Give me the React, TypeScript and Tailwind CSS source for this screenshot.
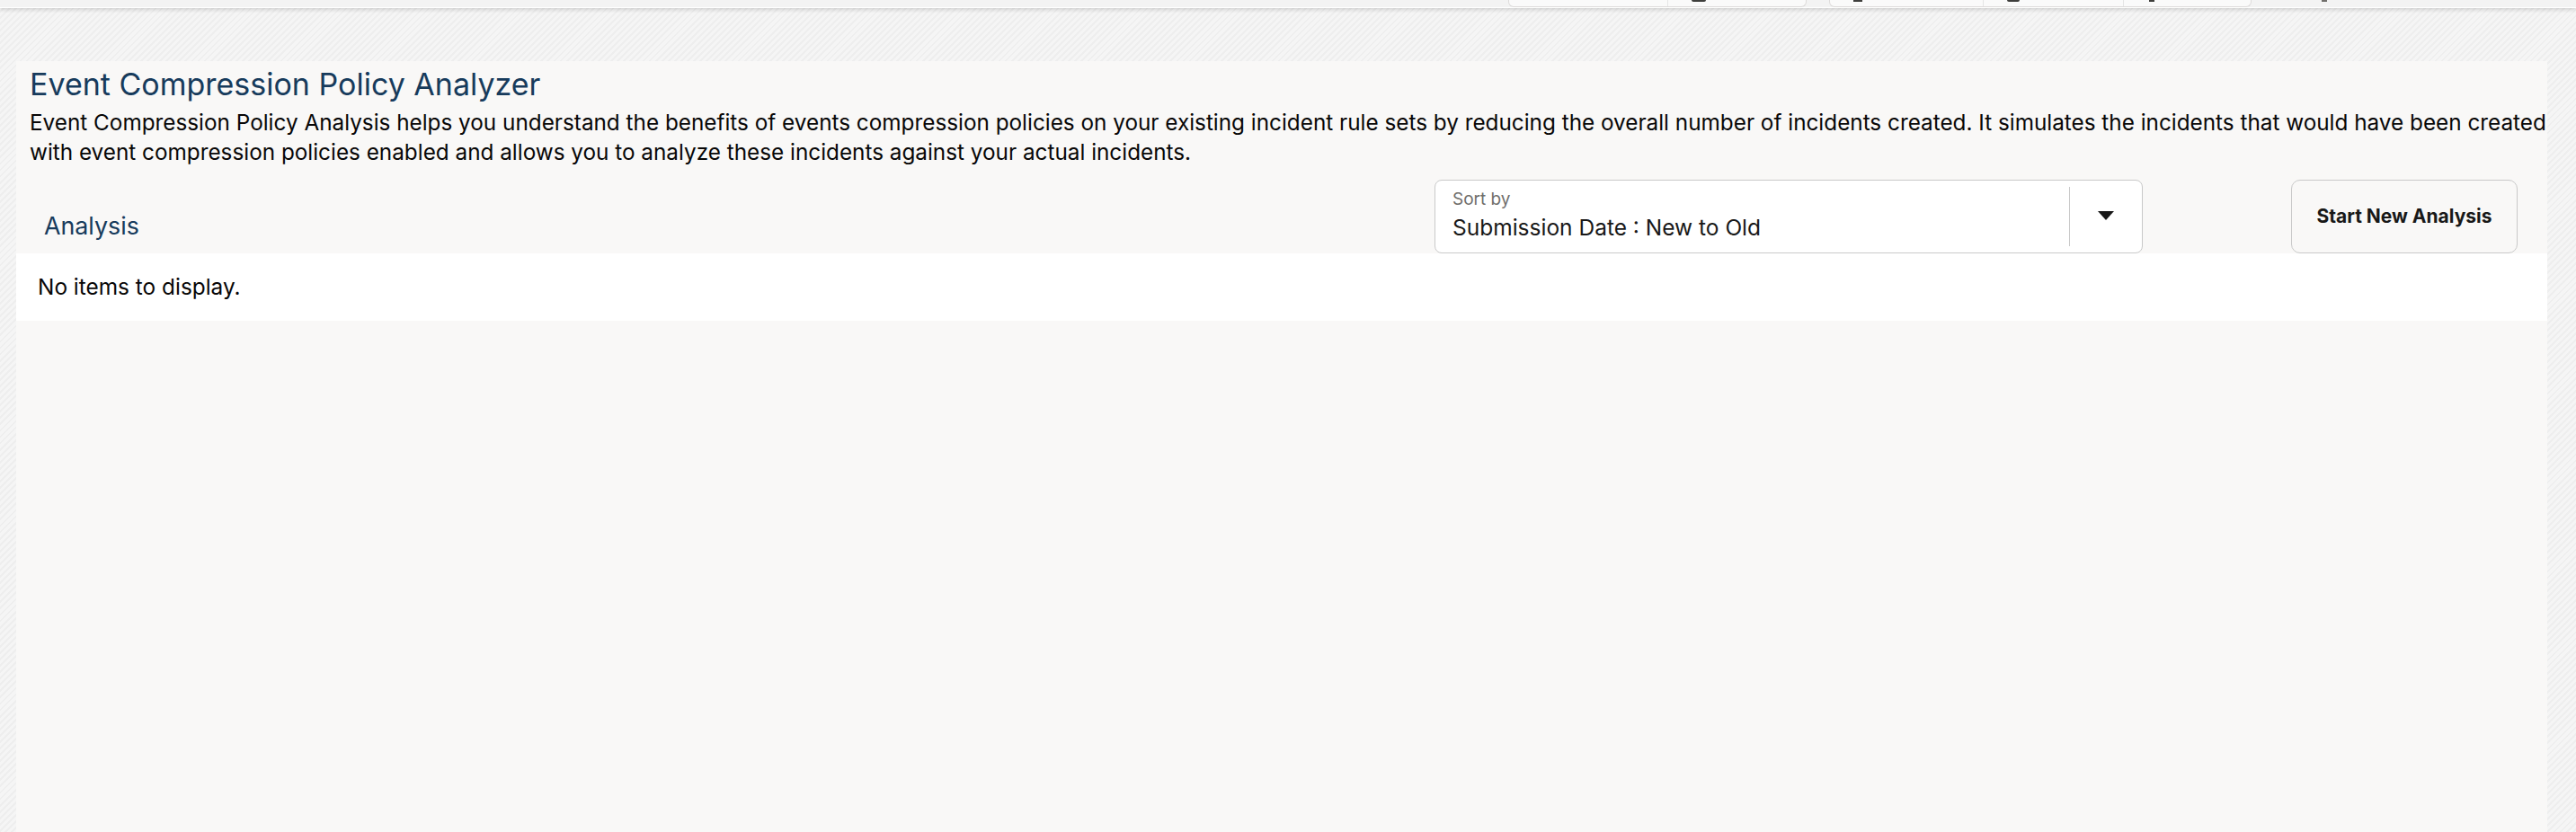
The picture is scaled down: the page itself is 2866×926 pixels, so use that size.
import React from 'react';

const font = "font-['Inter','Liberation_Sans',sans-serif]";

// bits of tab labels that peek out of the top edge of the window
const TopTabs: React.FC = () => (
  <div className="flex h-[8px] items-start pl-[1678px]">
    <div className="flex h-[8px] w-[332px] rounded-b-[6px] border-x border-b border-[#dddbda] bg-[#fafafa]">
      <div className="h-full w-[177px] border-r border-[#e5e5e5]" />
      <div className="relative h-full flex-1">
        <span className="absolute left-[26px] top-0 h-[2px] w-[16px] rounded-b-full bg-[#3e3e3c]" />
      </div>
    </div>
    <div className="ml-[25px] flex h-[8px] w-[470px] rounded-b-[6px] border-x border-b border-[#dddbda] bg-[#fafafa]">
      <div className="relative h-full w-[171px] border-r border-[#e5e5e5]">
        <span className="absolute left-[26px] top-0 h-[2px] w-[10px] bg-[#3e3e3c]" />
      </div>
      <div className="relative h-full w-[156px] border-r border-[#e5e5e5]">
        <span className="absolute left-[26px] top-0 h-[2px] w-[14px] rounded-b-full bg-[#3e3e3c]" />
      </div>
      <div className="relative h-full flex-1">
        <span className="absolute left-[28px] top-0 h-[2px] w-[6px] bg-[#3e3e3c]" />
      </div>
    </div>
    <div className="relative ml-[70px] h-[6px] w-[40px]">
      <span className="absolute left-[8px] top-0 h-[2px] w-[6px] bg-[#706e6b]" />
    </div>
  </div>
);

const SortBy: React.FC = () => (
  <div className="flex h-[82px] w-[788px] rounded-[8px] border border-[#c9c9c9] bg-white">
    <div className="flex flex-1 flex-col pl-[19px] pt-[10px]">
      <span className="text-[19px] leading-[22px] text-[#706e6b]">Sort by</span>
      <span className="mt-[6px] text-[24.5px] leading-[28px] text-[#181818]">Submission Date : New to Old</span>
    </div>
    <div className="my-[7px] w-px bg-[#c9c9c9]" />
    <div className="flex w-[80px] items-center justify-center">
      <svg width="18" height="10" viewBox="0 0 18 10" className="-mt-[2px]">
        <path d="M0 0 L18 0 L9 10 Z" fill="#181818" />
      </svg>
    </div>
  </div>
);

const App: React.FC = () => {
  return (
    <div
      className={`${font} flex min-h-screen w-full flex-col bg-[repeating-linear-gradient(135deg,#f5f5f5_0px,#f5f5f5_3px,#eeeeee_3px,#eeeeee_5px)]`}
    >
      <div className="h-[9px] w-full border-b border-white bg-[#f3f3f3] shadow-[0_2px_4px_rgba(0,0,0,0.14)]">
        <TopTabs />
      </div>

      <div className="ml-[18px] mr-[32px] mt-[59px] flex flex-1 flex-col bg-[#f9f8f7]">
        <div className="pl-[15px]">
          <h1 className="pt-[6px] text-[34px] leading-[40px] text-[#173b5c]">
            Event Compression Policy Analyzer
          </h1>
          <p className="-mr-[14px] mt-[6px] text-[24.3px] leading-[33px] text-[#080707]">
            Event Compression Policy Analysis helps you understand the benefits of events compression policies on your
            existing incident rule sets by reducing the overall number of incidents created. It simulates the incidents
            that would have been created with event compression policies enabled and allows you to analyze these
            incidents against your actual incidents.
          </p>
        </div>

        <div className="mt-[14px] flex h-[82px] items-center">
          <h2 className="flex-1 pl-[31px] pt-[20px] text-[26.8px] leading-[30px] text-[#173b5c]">Analysis</h2>
          <SortBy />
          <button className="ml-[165px] mr-[33px] h-[82px] w-[252px] rounded-[10px] border border-[#c9c9c9] bg-[#f9f8f7] text-[21px] font-bold text-[#181818]">
            Start New Analysis
          </button>
        </div>

        <div className="flex h-[75px] items-center bg-white pl-[24px]">
          <span className="text-[24.4px] text-[#080707]">No items to display.</span>
        </div>
      </div>
    </div>
  );
};

export default App;
